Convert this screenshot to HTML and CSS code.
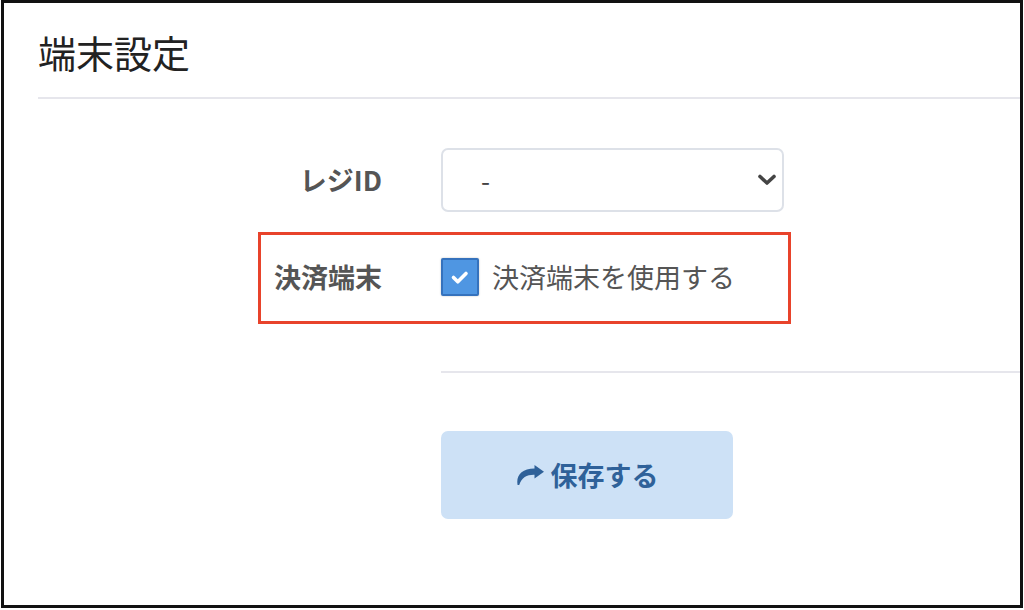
FILE: index.html
```html
<!DOCTYPE html>
<html lang="ja">
<head>
<meta charset="utf-8">
<title>端末設定</title>
<link rel="stylesheet" href="styles.css">
</head>
<body>
<div class="frame">
  <div class="page">
    <h1 class="title">端末設定</h1>
    <div class="rule"></div>
    <div class="form">
      <div class="row row-select">
        <div class="label">レジID</div>
        <div class="control">
          <div class="select">
            <span class="select-value">-</span>
            <svg class="chevron" width="20" height="12" viewBox="0 0 20 12"><path d="M3 2.5 L10 9 L17 2.5" fill="none" stroke="#444" stroke-width="3.6" stroke-linecap="round" stroke-linejoin="round"/></svg>
          </div>
        </div>
      </div>
      <div class="row row-check">
        <div class="label">決済端末</div>
        <div class="control check-control">
          <span class="checkbox">
            <svg width="34" height="34" viewBox="0 0 34 34"><path d="M10.5 17.5 L14.8 21.8 L23 13.5" fill="none" stroke="#fff" stroke-width="3.6" stroke-linecap="round" stroke-linejoin="round"/></svg>
          </span>
          <span class="check-text">決済端末を使用する</span>
        </div>
        <span class="annot"></span>
      </div>
      <div class="row row-divider">
        <div class="control"><div class="rule2"></div></div>
      </div>
      <div class="row row-button">
        <div class="control">
          <button class="save" type="button">
            <svg class="share" width="28" height="20" viewBox="0 0 28 20"><path d="M18.5 0 L28 6.8 L18.5 13.6 L18.5 9.8 C11 9.6 5.8 12.4 3.2 20 L1.6 20 C-0.2 11 5.5 3.6 18.5 3.6 Z" fill="#2f6199"/></svg>
            <span>保存する</span>
          </button>
        </div>
      </div>
    </div>
  </div>
</div>
</body>
</html>
```

FILE: styles.css
```css
html, body {
  margin: 0;
  padding: 0;
  background: #fff;
  overflow: hidden;
}
body {
  font-family: "Noto Sans CJK JP", "Noto Sans", sans-serif;
  color: #555;
}
.frame {
  box-sizing: border-box;
  margin-left: 1px;
  width: 1022px;
  height: 608px;
  border: 3px solid #111;
  background: #fff;
}
.page {
  padding-left: 34px;
}
.title {
  margin: 0;
  padding-top: 26px;
  font-size: 38px;
  line-height: 46px;
  font-weight: 400;
  color: #222;
}
.rule {
  margin-top: 22px;
  height: 2px;
  background: #e6e6ec;
}
.form {
  margin-top: 49px;
}
.row {
  display: grid;
  grid-template-columns: 344px 1fr;
  column-gap: 59px;
  align-items: center;
}
.label {
  text-align: right;
  font-size: 27px;
  font-weight: 700;
  color: #555;
  line-height: 1.2;
}
.control {
  grid-column: 2;
}
.select {
  box-sizing: border-box;
  width: 343px;
  height: 64px;
  border: 2px solid #dde1e8;
  border-radius: 7px;
  display: flex;
  align-items: center;
  justify-content: space-between;
  padding: 0 5px 0 38px;
  background: #fff;
}
.select-value {
  font-size: 26px;
  color: #444;
  line-height: 1;
}
.chevron {
  display: block;
}
.row-check {
  margin-top: 46px;
  position: relative;
}
.check-control {
  display: flex;
  align-items: center;
  gap: 13px;
}
.checkbox {
  box-sizing: border-box;
  width: 38px;
  height: 38px;
  background: #4f96e2;
  border: 2px solid #3572bd;
  border-radius: 2px;
  box-shadow: 0 0 2px rgba(0, 0, 0, 0.25);
  display: flex;
  align-items: center;
  justify-content: center;
}
.checkbox svg {
  display: block;
}
.check-text {
  font-size: 27px;
  line-height: 1.2;
  color: #555;
}
.annot {
  position: absolute;
  left: 220px;
  top: -26px;
  width: 533px;
  height: 92px;
  box-sizing: border-box;
  border: 3px solid #e8432b;
  pointer-events: none;
}
.row-divider {
  margin-top: 75px;
}
.rule2 {
  height: 2px;
  background: #e6e6ec;
}
.row-button {
  margin-top: 58px;
}
.save {
  box-sizing: border-box;
  width: 292px;
  height: 88px;
  border: none;
  border-radius: 7px;
  background: #cde1f6;
  color: #2f6199;
  font-family: "Noto Sans CJK JP", "Noto Sans", sans-serif;
  font-size: 27px;
  font-weight: 700;
  display: flex;
  align-items: center;
  justify-content: center;
  gap: 7px;
  padding: 0;
  margin: 0;
}
.save span {
  line-height: 1.2;
}
.share {
  display: block;
}
```
